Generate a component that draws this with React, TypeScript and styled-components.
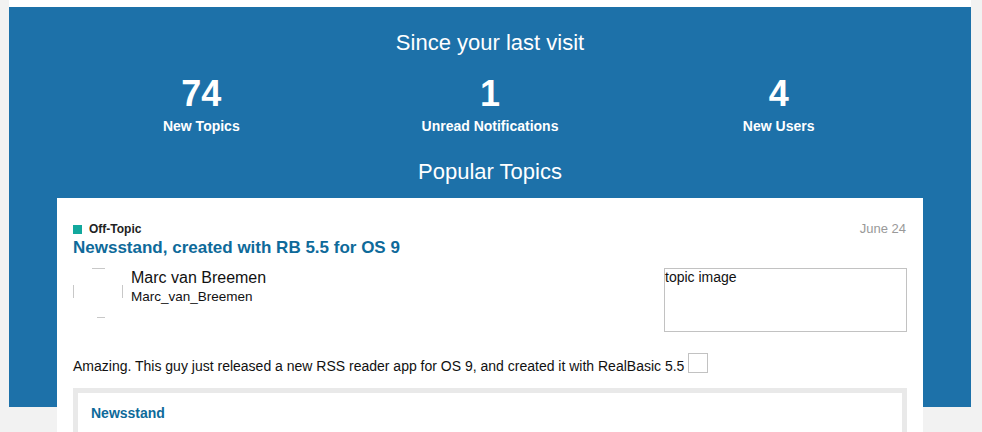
import React from 'react';
import styled, { createGlobalStyle } from 'styled-components';

const GlobalStyle = createGlobalStyle`
    body {
        margin: 0;
        padding: 0;
        background: #f2f2f2;
        font-family: "Liberation Sans", Arial, Helvetica, sans-serif;
    }
`;

const stats = [
    { value: 74, label: 'New Topics' },
    { value: 1, label: 'Unread Notifications' },
    { value: 4, label: 'New Users' },
];

const BrokenAvatar = () => (
    <AvatarBox>
        <svg width="50" height="50" viewBox="0 0 50 50">
            <g stroke="#c8c8c8" strokeWidth="1" fill="none">
                <line x1="19" y1="0.5" x2="32" y2="0.5" />
                <line x1="24" y1="49.5" x2="32" y2="49.5" />
                <line x1="0.5" y1="17" x2="0.5" y2="30" />
                <line x1="49.5" y1="17" x2="49.5" y2="30" />
            </g>
        </svg>
    </AvatarBox>
);

const App: React.FC = () => (
    <>
        <GlobalStyle />
        <Page>
            <Banner>
                <BannerTitle>Since your last visit</BannerTitle>
                <StatsRow>
                    {stats.map((s) => (
                        <Stat key={s.label}>
                            <StatValue>{s.value}</StatValue>
                            <StatLabel>{s.label}</StatLabel>
                        </Stat>
                    ))}
                </StatsRow>
                <SectionTitle>Popular Topics</SectionTitle>
                <TopicCard>
                    <CardHeader>
                        <Category>
                            <CategorySwatch $color="#12a89d" />
                            Off-Topic
                        </Category>
                        <DateText>June 24</DateText>
                    </CardHeader>
                    <TopicTitle>Newsstand, created with RB 5.5 for OS 9</TopicTitle>
                    <MetaRow>
                        <Author>
                            <BrokenAvatar />
                            <AuthorNames>
                                <AuthorName>Marc van Breemen</AuthorName>
                                <Username>Marc_van_Breemen</Username>
                            </AuthorNames>
                        </Author>
                        <TopicImage>topic image</TopicImage>
                    </MetaRow>
                    <Excerpt>
                        Amazing. This guy just released a new RSS reader app for OS 9, and
                        created it with RealBasic 5.5 <InlineImage />
                    </Excerpt>
                    <Onebox>
                        <OneboxTitle>Newsstand</OneboxTitle>
                        <OneboxBody />
                    </Onebox>
                </TopicCard>
            </Banner>
        </Page>
    </>
);

// white strip on top, blue band down to 407px, then the page grey shows through
const Page = styled.div`
    margin-left: 9px;
    width: 962px;
    padding-top: 7px;
    background: linear-gradient(
        to bottom,
        #fff 0,
        #fff 7px,
        #1d71a9 7px,
        #1d71a9 407px,
        transparent 407px
    );
`;

const Banner = styled.section`
    display: flex;
    flex-direction: column;
    align-items: center;
    padding: 24px 48px 0;
    color: #fff;
`;

const BannerTitle = styled.h2`
    margin: 0;
    font-size: 22px;
    line-height: 24px;
    font-weight: 400;
`;

const StatsRow = styled.div`
    display: grid;
    grid-template-columns: repeat(3, 1fr);
    width: 100%;
    margin-top: 21px;
`;

const Stat = styled.div`
    display: flex;
    flex-direction: column;
    align-items: center;
`;

const StatValue = styled.div`
    font-size: 36px;
    line-height: 36px;
    font-weight: 700;
`;

const StatLabel = styled.div`
    margin-top: 6px;
    font-size: 14px;
    line-height: 16px;
    font-weight: 700;
`;

const SectionTitle = styled.h2`
    margin: 25px 0 0;
    font-size: 22px;
    line-height: 26px;
    font-weight: 400;
`;

const TopicCard = styled.article`
    align-self: stretch;
    margin-top: 13px;
    padding: 23px 16px 24px;
    background: #fff;
    color: #222;
`;

const CardHeader = styled.div`
    display: flex;
    justify-content: space-between;
    align-items: center;
`;

const Category = styled.span`
    display: flex;
    align-items: center;
    gap: 7px;
    font-size: 12px;
    line-height: 14px;
    font-weight: 700;
    color: #222;
`;

const CategorySwatch = styled.span<{ $color: string }>`
    width: 9px;
    height: 9px;
    background: ${(p) => p.$color};
`;

const DateText = styled.span`
    margin-right: 1px;
    font-size: 13px;
    line-height: 16px;
    color: #999;
`;

const TopicTitle = styled.h3`
    margin: 0;
    font-size: 17px;
    line-height: 22px;
    font-weight: 700;
    color: #0e6a9a;
`;

const MetaRow = styled.div`
    display: flex;
    justify-content: space-between;
    align-items: flex-start;
    margin-top: 9px;
`;

const Author = styled.div`
    display: flex;
    align-items: flex-start;
    gap: 8px;
`;

const AvatarBox = styled.div`
    width: 50px;
    height: 50px;
    svg {
        display: block;
    }
`;

const AuthorNames = styled.div`
    display: flex;
    flex-direction: column;
    padding-top: 1px;
`;

const AuthorName = styled.span`
    font-size: 16px;
    line-height: 18px;
    color: #111;
`;

const Username = styled.span`
    margin-top: 2px;
    font-size: 13.5px;
    line-height: 16px;
    color: #111;
`;

const TopicImage = styled.div`
    width: 241px;
    height: 62px;
    border: 1px solid #c2c2c2;
    font-size: 14px;
    line-height: 16px;
    color: #111;
`;

const Excerpt = styled.p`
    margin: 21px 0 0;
    font-size: 14px;
    line-height: 20px;
    color: #111;
`;

const InlineImage = styled.span`
    display: inline-block;
    width: 18px;
    height: 18px;
    border: 1px solid #c2c2c2;
    vertical-align: -2px;
`;

const Onebox = styled.div`
    margin-top: 12px;
    padding: 12px 13px;
    border: 5px solid #e9e9e9;
    background: #fff;
`;

const OneboxTitle = styled.div`
    font-size: 14px;
    line-height: 16px;
    font-weight: 700;
    color: #0e6a9a;
`;

const OneboxBody = styled.div`
    height: 40px;
`;

export default App;
